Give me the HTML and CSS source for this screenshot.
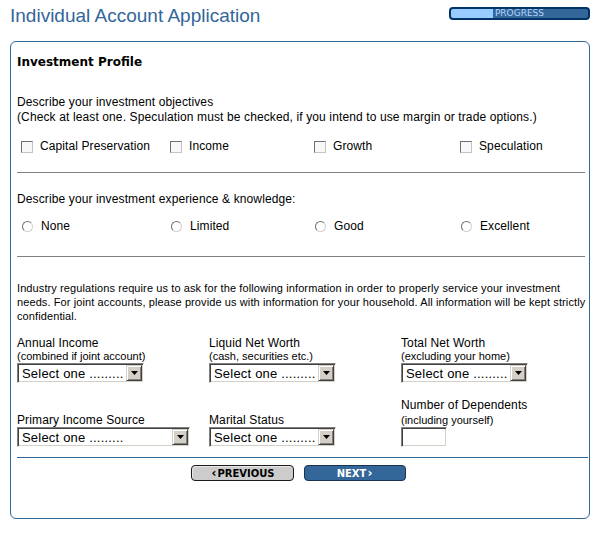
FILE: index.html
```html
<!DOCTYPE html>
<html lang="en">
<head>
  <meta charset="UTF-8">
  <meta name="viewport" content="width=device-width, initial-scale=1.0">
  <title>Individual Account Application</title>
  <link rel="stylesheet" href="styles.css">
</head>
<body>
  <div class="header">
    <h1 class="title">Individual Account Application</h1>
    <div class="progress"><span>PROGRESS</span></div>
  </div>

  <form class="panel" onsubmit="return false;">
    <h2>Investment Profile</h2>

    <p class="question first">Describe your investment objectives<br>(Check at least one. Speculation must be checked, if you intend to use margin or trade options.)</p>
    <div class="choices">
      <label class="choice"><input type="checkbox" name="obj">Capital Preservation</label>
      <label class="choice"><input type="checkbox" name="obj">Income</label>
      <label class="choice"><input type="checkbox" name="obj">Growth</label>
      <label class="choice"><input type="checkbox" name="obj">Speculation</label>
    </div>

    <hr class="rule">

    <p class="question second">Describe your investment experience &amp; knowledge:</p>
    <div class="choices radios">
      <label class="choice"><input type="radio" name="exp">None</label>
      <label class="choice"><input type="radio" name="exp">Limited</label>
      <label class="choice"><input type="radio" name="exp">Good</label>
      <label class="choice"><input type="radio" name="exp">Excellent</label>
    </div>

    <hr class="rule">

    <p class="note">Industry regulations require us to ask for the following information in order to properly service your investment needs. For joint accounts, please provide us with information for your household. All information will be kept strictly confidential.</p>

    <div class="fields">
      <div class="field">
        <span class="label">Annual Income</span>
        <span class="hint">(combined if joint account)</span>
        <span class="combo">
          <select><option>Select one .........</option></select>
          <span class="combo-btn"><svg width="7" height="4" viewBox="0 0 7 4"><polygon points="0,0 7,0 3.5,4" fill="#000"/></svg></span>
        </span>
      </div>
      <div class="field">
        <span class="label">Liquid Net Worth</span>
        <span class="hint">(cash, securities etc.)</span>
        <span class="combo">
          <select><option>Select one .........</option></select>
          <span class="combo-btn"><svg width="7" height="4" viewBox="0 0 7 4"><polygon points="0,0 7,0 3.5,4" fill="#000"/></svg></span>
        </span>
      </div>
      <div class="field">
        <span class="label">Total Net Worth</span>
        <span class="hint">(excluding your home)</span>
        <span class="combo">
          <select><option>Select one .........</option></select>
          <span class="combo-btn"><svg width="7" height="4" viewBox="0 0 7 4"><polygon points="0,0 7,0 3.5,4" fill="#000"/></svg></span>
        </span>
      </div>

      <div class="field">
        <span class="label">Primary Income Source</span>
        <span class="combo wide">
          <select><option>Select one .........</option></select>
          <span class="combo-btn"><svg width="7" height="4" viewBox="0 0 7 4"><polygon points="0,0 7,0 3.5,4" fill="#000"/></svg></span>
        </span>
      </div>
      <div class="field">
        <span class="label">Marital Status</span>
        <span class="combo">
          <select><option>Select one .........</option></select>
          <span class="combo-btn"><svg width="7" height="4" viewBox="0 0 7 4"><polygon points="0,0 7,0 3.5,4" fill="#000"/></svg></span>
        </span>
      </div>
      <div class="field">
        <span class="label spaced">Number of Dependents</span>
        <span class="hint">(including yourself)</span>
        <input type="text" class="text-box">
      </div>
    </div>

    <div class="divider"></div>

    <div class="actions">
      <button type="button" class="btn btn-prev"><span class="arrow">&lsaquo;</span>PREVIOUS</button>
      <button type="submit" class="btn btn-next">NEXT<span class="arrow">&rsaquo;</span></button>
    </div>
  </form>
</body>
</html>
```

FILE: styles.css
```css
html, body {
background-color: #ffffff;
margin: 0;
padding: 0;
font-family: "Liberation Sans", Arial, sans-serif;
color: #000;
}

.header {
display: flex;
justify-content: space-between;
align-items: flex-start;
height: 41px;
box-sizing: border-box;
padding: 4px 10px 0 10px;
width: 600px;
}

.title {
margin: 0;
font-size: 19px;
line-height: 24px;
font-weight: normal;
color: #336699;
}

.progress {
margin-top: 3px;
width: 141px;
height: 13px;
box-sizing: border-box;
border: 2px solid #003366;
border-radius: 4px;
background: linear-gradient(to right, #99ccff 0, #99ccff 42px, #336699 42px);
display: flex;
align-items: center;
justify-content: center;
}

.progress span {
font-family: "DejaVu Sans", sans-serif;
font-size: 9px;
line-height: 9px;
color: #b3d6ff;
}

.panel {
margin: 0 0 0 10px;
width: 580px;
box-sizing: border-box;
border: 1px solid #336699;
border-radius: 6px;
padding: 12px 4px 37px 6px;
}

.panel h2 {
margin: 0;
font-family: "DejaVu Sans", sans-serif;
font-size: 12px;
line-height: 16px;
font-weight: bold;
}

.question {
margin: 0;
font-size: 12px;
line-height: 15px;
letter-spacing: 0.12px;
}

.question.first {
margin-top: 25px;
}

.question.second {
margin-top: 19px;
}

.choices {
display: grid;
grid-template-columns: 149px 144px 146px auto;
margin-top: 14px;
}

.choices.radios {
margin-top: 12px;
}

.choice {
display: flex;
align-items: center;
font-size: 12px;
line-height: 15px;
letter-spacing: 0.1px;
}

.choice input {
appearance: none;
-webkit-appearance: none;
margin: 0 7px 0 4px;
width: 12px;
height: 12px;
box-sizing: border-box;
border: 1px solid;
border-color: #6f6f6f #c4c4c4 #c4c4c4 #6f6f6f;
background: #f8f8f8;
}

.choice input[type="radio"] {
border-radius: 50%;
width: 11px;
height: 11px;
margin: 0 8px 0 5px;
background: #ffffff;
border-color: #707070 #d0d0d0 #d0d0d0 #707070;
}

.rule {
margin: 18px 0 0 0;
border: none;
border-top: 1px solid #808080;
height: 0;
}

.choices.radios + .rule {
margin-top: 22px;
}

.note {
margin: 24px -4px 0 0;
font-size: 11px;
line-height: 14px;
letter-spacing: 0.1px;
}

.fields {
display: grid;
grid-template-columns: 192px 192px auto;
row-gap: 17px;
align-items: end;
margin-top: 13px;
}

.field {
display: flex;
flex-direction: column;
align-items: flex-start;
}

.label {
font-size: 12px;
line-height: 14px;
letter-spacing: 0.12px;
}

.label.spaced {
margin-bottom: 2px;
margin-top: -2px;
}

.hint {
font-size: 11px;
line-height: 13px;
}

.combo {
display: flex;
align-items: center;
width: 127px;
height: 20px;
box-sizing: border-box;
border: 1px solid;
border-color: #808080 #ffffff #ffffff #808080;
box-shadow: inset 1px 1px 0 #404040, inset -1px -1px 0 #d4d0c8;
background: #fff;
padding: 1px;
}

.combo.wide {
width: 173px;
}

.combo select {
appearance: none;
-webkit-appearance: none;
flex: 1;
min-width: 0;
height: 16px;
border: none;
outline: none;
background: transparent;
padding: 0 0 0 3px;
margin: 0;
font-family: "Liberation Sans", Arial, sans-serif;
font-size: 13px;
letter-spacing: 0.2px;
color: #000;
}

.combo-btn {
width: 16px;
height: 16px;
box-sizing: border-box;
border: 1px solid;
border-color: #d4d0c8 #404040 #404040 #d4d0c8;
box-shadow: inset 1px 1px 0 #ffffff, inset -1px -1px 0 #808080;
background: #d4d0c8;
display: flex;
align-items: center;
justify-content: center;
}

.text-box {
width: 46px;
height: 20px;
box-sizing: border-box;
margin: 0;
padding: 0 2px;
border: 1px solid;
border-color: #808080 #ffffff #ffffff #808080;
box-shadow: inset 1px 1px 0 #404040, inset -1px -1px 0 #d4d0c8;
background: #fff;
outline: none;
}

.divider {
margin-top: 10px;
border-top: 1px solid #336699;
margin-right: -3px;
}

.actions {
display: flex;
justify-content: center;
gap: 10px;
margin-top: 7px;
padding-right: 5px;
}

.btn {
width: 103px;
height: 16px;
box-sizing: border-box;
padding: 0;
border: 1px solid #1b1b1b;
border-radius: 4px;
font-family: "DejaVu Sans", sans-serif;
font-size: 10px;
font-weight: bold;
line-height: 14px;
cursor: pointer;
}

.btn .arrow {
font-size: 12px;
margin: 0 1px;
}

.btn-prev {
background: #cccccc;
color: #000;
box-shadow: inset 1px 1px 0 #e8e8e8;
}

.btn-next {
width: 102px;
background: #336699;
color: #fff;
border-color: #1a3350;
}
```
